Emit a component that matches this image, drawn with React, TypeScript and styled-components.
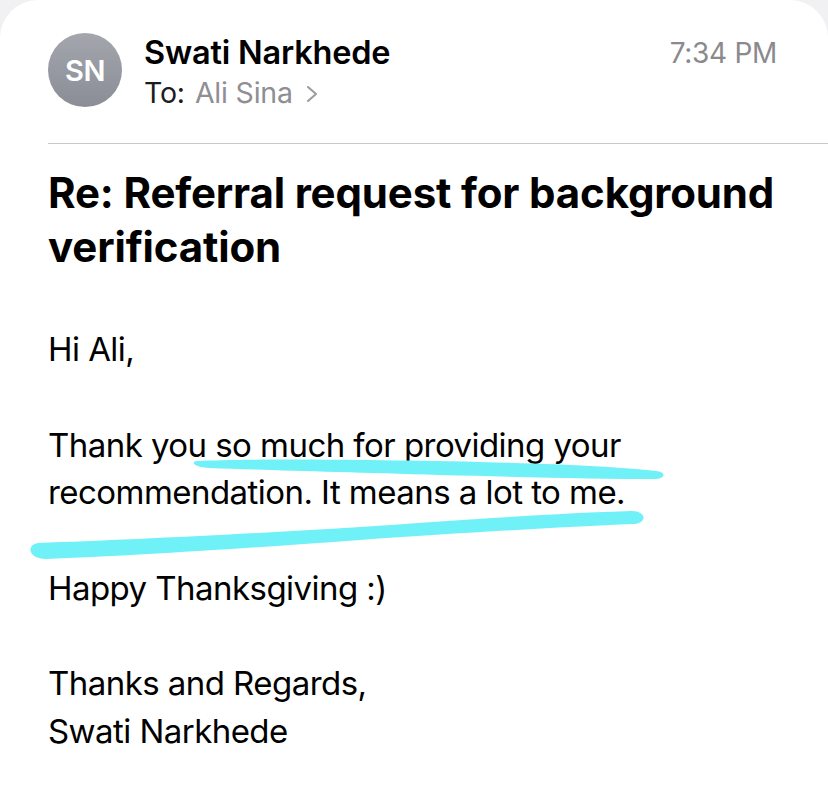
import React from "react";
import styled, { createGlobalStyle } from "styled-components";

const Global = createGlobalStyle`
  html, body { margin: 0; padding: 0; background: #f1f1f3; }
  body { font-family: Inter, "Liberation Sans", sans-serif; -webkit-font-smoothing: antialiased; }
`;

const Card = styled.div`
  position: relative;
  width: 828px;
  height: 795px;
  background: #ffffff;
  border-radius: 38px 38px 0 0;
  overflow: hidden;
  box-sizing: border-box;
  padding-top: 33px;
`;

const Header = styled.header`
  display: flex;
  align-items: flex-start;
  margin-left: 48px;
  padding-right: 51px;
  height: 110px;
  border-bottom: 1px solid #c9c9cc;
`;

const Avatar = styled.div`
  width: 74px;
  height: 74px;
  border-radius: 50%;
  background: linear-gradient(180deg, #a4a6ae 0%, #8b8d96 100%);
  color: #fff;
  display: flex;
  align-items: center;
  justify-content: center;
  font-size: 29px;
  font-weight: 600;
  letter-spacing: -0.5px;
  flex-shrink: 0;
`;

const Who = styled.div`
  display: flex;
  flex-direction: column;
  margin-left: 22px;
  flex: 1;
`;

const Name = styled.div`
  font-size: 32.5px;
  font-weight: 600;
  line-height: 40px;
  color: #000;
  letter-spacing: -0.2px;
`;

const ToLine = styled.div`
  display: flex;
  align-items: center;
  font-size: 28.5px;
  line-height: 40px;
  color: #1c1c1e;
  letter-spacing: -0.2px;
`;

const Recipient = styled.span`
  color: #8e8e93;
  margin-left: 10px;
`;

const Chevron = styled.svg`
  margin-left: 13px;
  margin-top: 2px;
`;

const Time = styled.div`
  font-size: 28px;
  line-height: 40px;
  color: #8a8a8e;
  letter-spacing: -0.3px;
`;

const Subject = styled.h1`
  margin: 22px 48px 0 48px;
  font-size: 42px;
  line-height: 54px;
  font-weight: 700;
  color: #000;
  letter-spacing: -0.15px;
`;

const Body = styled.div`
  margin: 52px 48px 0 48px;
  font-size: 33px;
  line-height: 47.5px;
  color: #000;
  letter-spacing: -0.55px;
`;

const Para = styled.p`
  margin: 0 0 48px 0;
`;

const Highlights = styled.svg`
  position: absolute;
  left: 0;
  top: 0;
  pointer-events: none;
`;

export default function App() {
  return (
    <>
      <Global />
      <Card>
        <Header>
          <Avatar>SN</Avatar>
          <Who>
            <Name>Swati Narkhede</Name>
            <ToLine>
              To:<Recipient>Ali Sina</Recipient>
              <Chevron width="12" height="18" viewBox="0 0 12 18">
                <polyline points="2,2 10,9 2,16" fill="none" stroke="#9a9a9f" strokeWidth="2" strokeLinecap="round" strokeLinejoin="round" />
              </Chevron>
            </ToLine>
          </Who>
          <Time>7:34 PM</Time>
        </Header>
        <Subject>Re: Referral request for background verification</Subject>
        <Body>
          <Para>Hi Ali,</Para>
          <Para>
            Thank you so much for providing your recommendation. It means a lot to me.
          </Para>
          <Para>Happy Thanksgiving :)</Para>
          <Para>
            Thanks and Regards,
            <br />
            Swati Narkhede
          </Para>
        </Body>
        <Highlights width="828" height="795" viewBox="0 0 828 795">
          <path
            d="M197 461 C 240 459, 330 459, 480 462 C 560 464, 620 467, 656 471 C 666 472, 666 478, 656 479 C 600 479, 520 477, 440 475 C 340 472, 260 470, 210 468 C 194 467, 190 462, 197 461 Z"
            fill="#70f1f7"
          />
          <path
            d="M38 543 C 120 540, 230 535, 360 527 C 460 520, 560 513, 632 511 C 646 511, 648 523, 634 524 C 560 527, 460 533, 360 540 C 250 548, 130 556, 46 559 C 28 559, 26 545, 38 543 Z"
            fill="#70f1f7"
          />
        </Highlights>
      </Card>
    </>
  );
}
